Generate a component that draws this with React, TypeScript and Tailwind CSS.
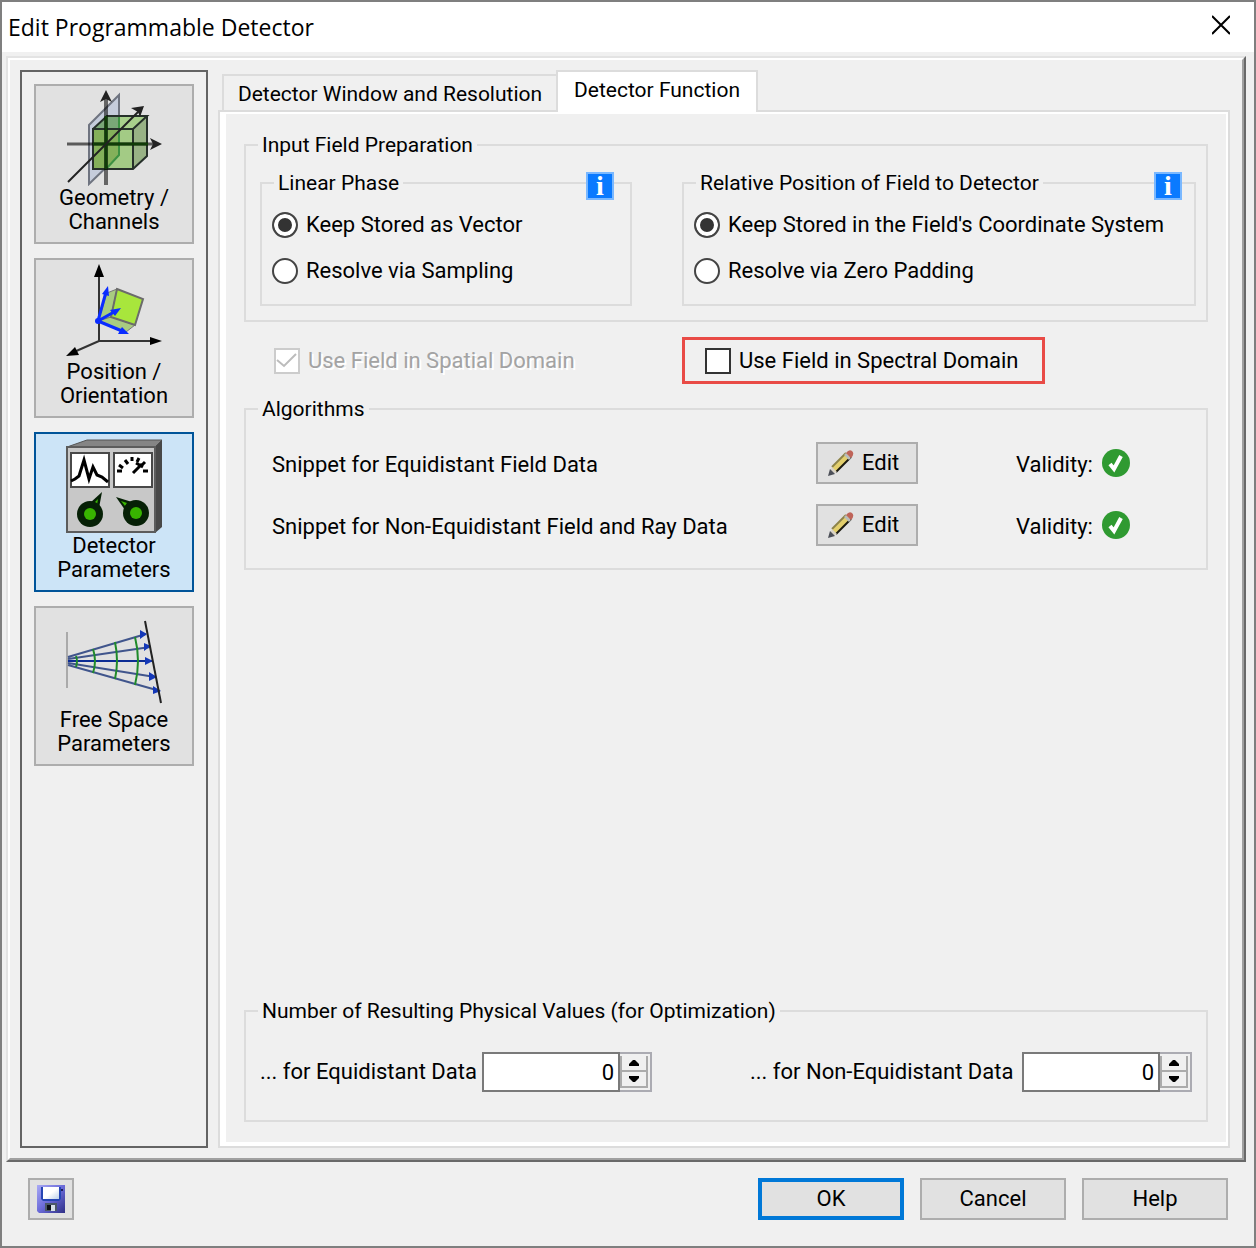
import { useState } from "react";
import type { ReactNode } from "react";

function GeometryIcon() {
  return (
    <svg width="96" height="96" viewBox="0 0 96 96" fill="none" aria-hidden="true">
      <polygon points="23,35 53,5 53,65 23,94" fill="#b9c3d8" fillOpacity="0.7" stroke="#6f7480" strokeWidth="2" />
      <polygon points="27,39 41,26 81,26 67,39" fill="#a9d08c" />
      <polygon points="67,39 81,26 81,66 67,79" fill="#98b285" />
      <rect x="27" y="39" width="40" height="40" fill="#a3cb85" />
      <polygon points="27,39 41,26 53,26 53,65 40,79 27,79" fill="#7fac52" fillOpacity="0.85" />
      <polygon points="27,39 41,26 53,26 53,39" fill="#7aa777" />
      <path d="M53 26V65L40 79" stroke="#3d9142" strokeWidth="2" />
      <path d="M27 39L41 26H81L67 39H27V79H67L81 66V26M67 39V79" stroke="#26302a" strokeWidth="2" />
      <path d="M40 5V95" stroke="#000" strokeOpacity="0.55" strokeWidth="4" />
      <path d="M1 54H90" stroke="#000" strokeOpacity="0.6" strokeWidth="3" />
      <path d="M27 54H82M40 26V79" stroke="#103c08" strokeWidth="3" />
      <path d="M2 92L74 20" stroke="#222" strokeWidth="2" />
      <path d="M40 0L46 12L40 9L34 12Z" fill="#222" />
      <path d="M96 54L84 60L87 54L84 48Z" fill="#222" />
      <path d="M78 16L74 27L72 22L65 18Z" fill="#222" />
    </svg>
  );
}

function PositionIcon() {
  return (
    <svg width="96" height="96" viewBox="0 0 96 96" fill="none" aria-hidden="true">
      <polygon points="41,29 51,25 45,53 32,57" fill="#a9cc80" stroke="#777" strokeWidth="1" />
      <polygon points="32,57 45,53 69,61 60,68" fill="#a9cc80" stroke="#777" strokeWidth="1" />
      <polygon points="51,25 77,35 69,61 45,53" fill="#a8e63c" stroke="#6b6b6b" strokeWidth="2" />
      <path d="M33 8V77H88M33 77L8 88" stroke="#333" strokeWidth="2" />
      <path d="M33 0L38 13H28Z M96 77L84 73V81Z M0 92L9 83L13 91Z" fill="#000" />
      <path d="M32 57L40 28M32 57L48 48M32 57L56 67" stroke="#0a2cff" strokeWidth="3" />
      <path d="M42 22L43 32L36 30Z M55 44L49 52L44 46Z M63 70L52 70L56 63Z" fill="#0a2cff" />
      <circle cx="32" cy="57" r="3" fill="#0a2cff" />
    </svg>
  );
}

function DetectorIcon() {
  return (
    <svg width="96" height="96" viewBox="0 0 96 96" fill="none" aria-hidden="true">
      <polygon points="1,9 21,2 96,2 89,9" fill="#858585" stroke="#555" strokeWidth="1" />
      <polygon points="89,9 96,2 96,89 89,95" fill="#484848" />
      <rect x="1" y="9" width="88" height="85" fill="#c8c8c8" stroke="#5c5c5c" strokeWidth="2" />
      <rect x="5" y="15" width="38" height="34" fill="#fff" stroke="#484848" strokeWidth="2" />
      <rect x="48" y="15" width="38" height="34" fill="#fff" stroke="#484848" strokeWidth="2" />
      <path d="M5 43L9 41L13 38L18 22L23 41L27 29L31 37L36 39L42 44" stroke="#000" strokeWidth="3" />
      <path
        d="M51 33H56M53 27L57 30M59 22L62 26M66 19V23M73 20L71 24M79 24L75 28M82 33H77"
        stroke="#000"
        strokeWidth="3"
      />
      <path d="M67 35L76 26M70 25L77 29" stroke="#000" strokeWidth="3" />
      <path d="M36 54L33 70L24 65Z" fill="#062006" />
      <path d="M32 61L31 67L28 65Z" fill="#38b400" />
      <circle cx="24" cy="76" r="13" fill="#062006" />
      <circle cx="24" cy="76" r="6" fill="#38b400" />
      <path d="M50 59L66 64L59 72Z" fill="#062006" />
      <path d="M55 63L61 65L59 68Z" fill="#38b400" />
      <circle cx="70" cy="75" r="13" fill="#062006" />
      <circle cx="70" cy="75" r="6" fill="#38b400" />
    </svg>
  );
}

function FreeSpaceIcon() {
  return (
    <svg width="96" height="96" viewBox="0 0 96 96" fill="none" aria-hidden="true">
      <path d="M1 20V76" stroke="#aaa" strokeWidth="2" />
      <path d="M2 45L80 22M2 47L84 35M2 51L89 65M2 53L94 79" stroke="#40558c" strokeWidth="2" />
      <path d="M2 49H86" stroke="#0c2c94" strokeWidth="2" />
      <path
        d="M10 44Q12 49 10 55M27 37Q31 49 27 61M49 30Q53 49 49 67M69 25Q75 49 69 73"
        stroke="#1f8a2a"
        strokeWidth="2"
      />
      <path
        d="M81 22L74 18V27Z M85 34L78 31V39Z M87 49L79 45V53Z M91 65L83 60V69Z M95 79L87 74V82Z"
        fill="#1438b8"
      />
      <path d="M79 9L95 91" stroke="#222" strokeWidth="2" />
    </svg>
  );
}

function PencilIcon() {
  return (
    <svg width="26" height="26" viewBox="0 0 26 26" aria-hidden="true">
      <polygon points="4,18 19,3 23,7 8,22" fill="#e3cf6c" />
      <path d="M4 17L18 3" stroke="#8d8347" strokeWidth="2" />
      <path d="M8 22L23 7" stroke="#1c1a10" strokeWidth="2" />
      <polygon points="16,5 18,3 23,8 21,10" fill="#b8bcbc" />
      <path d="M18 3Q21 -1 24 1Q27 4 23 8Z" fill="#bf6459" />
      <polygon points="4,17 9,22 1,25" fill="#d9d2c4" />
      <path d="M0 26L2 19L7 24Z" fill="#4c4f58" />
    </svg>
  );
}

function ValidIcon() {
  return (
    <svg width="28" height="28" viewBox="0 0 28 28" role="img" aria-label="Valid">
      <circle cx="14" cy="14" r="14" fill="#2f9a31" />
      <path d="M8 15L12 20L19 7" fill="none" stroke="#fff" strokeWidth="4" />
    </svg>
  );
}

function SaveIcon() {
  return (
    <svg width="28" height="28" viewBox="0 0 28 28" aria-hidden="true">
      <defs>
        <linearGradient id="disk" x1="0" y1="0" x2="1" y2="1">
          <stop offset="0" stopColor="#a9a9f5" />
          <stop offset="0.5" stopColor="#6a6ad8" />
          <stop offset="1" stopColor="#2f2f86" />
        </linearGradient>
        <linearGradient id="disk-label" x1="0" y1="0" x2="1" y2="1">
          <stop offset="0.5" stopColor="#fff" />
          <stop offset="1" stopColor="#bcd0ea" />
        </linearGradient>
      </defs>
      <path d="M0 0H28V28H2L0 26Z" fill="url(#disk)" />
      <path d="M4 2H6V14H22V2H24V14L22 16H6L4 14Z" fill="#2646b4" />
      <rect x="6" y="2" width="16" height="12" fill="url(#disk-label)" />
      <rect x="24" y="4" width="2" height="2" fill="#1d1d5c" />
      <rect x="8" y="18" width="12" height="8" fill="#4b5868" />
      <rect x="10" y="20" width="4" height="5" fill="#0b0f16" />
      <rect x="14" y="20" width="4" height="6" fill="#d6dfe8" />
    </svg>
  );
}

const sections = [
  { id: "geometry", label: "Geometry / Channels", Icon: GeometryIcon },
  { id: "position", label: "Position / Orientation", Icon: PositionIcon },
  { id: "detector", label: "Detector Parameters", Icon: DetectorIcon },
  { id: "freespace", label: "Free Space Parameters", Icon: FreeSpaceIcon },
];

const snippets = [
  "Snippet for Equidistant Field Data",
  "Snippet for Non-Equidistant Field and Ray Data",
];

function GroupBox({ title, className = "", children }: { title: string; className?: string; children: ReactNode }) {
  return (
    <fieldset className={`min-w-0 border-2 border-[#dcdcdc] ${className}`}>
      <legend className="ml-3 px-1 text-[21px] leading-7">{title}</legend>
      {children}
    </fieldset>
  );
}

function InfoButton() {
  return (
    <button
      type="button"
      aria-label="Info"
      className="flex size-7 items-center justify-center border-2 border-[#7ab8ff] bg-[#0a7aff] font-['Liberation_Serif',serif] text-[28px] leading-6 font-bold text-white"
    >
      i
    </button>
  );
}

interface RadioProps {
  name: string;
  label: string;
  checked: boolean;
  onChange: () => void;
}

function Radio({ name, label, checked, onChange }: RadioProps) {
  return (
    <label className="flex h-7 items-center gap-2 whitespace-nowrap">
      <input
        type="radio"
        name={name}
        checked={checked}
        onChange={onChange}
        className="size-[26px] shrink-0 appearance-none rounded-full border-2 border-[#444] bg-white checked:bg-[#333] checked:shadow-[inset_0_0_0_4px_white]"
      />
      {label}
    </label>
  );
}

interface RadioGroupProps {
  title: string;
  name: string;
  options: string[];
  infoClass: string;
}

function RadioGroup({ title, name, options, infoClass }: RadioGroupProps) {
  const [selected, setSelected] = useState(0);

  return (
    <div className="relative min-w-0">
      <GroupBox title={title}>
        <div className="flex flex-col gap-[18px] pt-[14px] pb-[19px] pl-2.5">
          {options.map((option, i) => (
            <Radio
              key={option}
              name={name}
              label={option}
              checked={selected === i}
              onChange={() => setSelected(i)}
            />
          ))}
        </div>
      </GroupBox>
      <div className={`absolute top-[3px] ${infoClass}`}>
        <InfoButton />
      </div>
    </div>
  );
}

function NumberField({ id, label, labelClass }: { id: string; label: string; labelClass: string }) {
  const [value, setValue] = useState(0);

  return (
    <div className="flex items-center">
      <label htmlFor={id} className={`whitespace-nowrap ${labelClass}`}>
        {label}
      </label>
      <input
        id={id}
        type="text"
        inputMode="numeric"
        value={value}
        onChange={(e) => setValue(Number(e.target.value) || 0)}
        className="h-10 w-[138px] border-2 border-[#7a7a7a] bg-white pr-1 text-right"
      />
      <div className="flex h-10 w-8 flex-col border-2 border-l-0 border-[#ababb2] pt-0.5 pr-0.5 pb-0.5">
        <button
          type="button"
          aria-label="Increase"
          onClick={() => setValue(value + 1)}
          className="flex flex-1 items-center justify-center border-x-2 border-b-2 border-[#ababab]"
        >
          <svg width="10" height="6" viewBox="0 0 10 6" aria-hidden="true">
            <path d="M4 0H6L10 4V6H0V4Z" />
          </svg>
        </button>
        <button
          type="button"
          aria-label="Decrease"
          onClick={() => setValue(Math.max(0, value - 1))}
          className="flex flex-1 items-center justify-center border-x-2 border-b-2 border-[#ababab]"
        >
          <svg width="10" height="6" viewBox="0 0 10 6" aria-hidden="true">
            <path d="M0 0H10V2L6 6H4L0 2Z" />
          </svg>
        </button>
      </div>
    </div>
  );
}

export default function App() {
  const [section, setSection] = useState("detector");
  const [spectral, setSpectral] = useState(false);

  return (
    <div className="flex min-h-screen flex-col border-2 border-[#7f7f7f] bg-[#f0f0f0] font-[Roboto,sans-serif] text-[22px] leading-7 text-black">
      {/* Title bar */}
      <header className="flex h-[50px] items-center justify-between bg-white pr-6 pl-1.5">
        <h1 className="font-['Open_Sans',sans-serif] text-[23px]">Edit Programmable Detector</h1>
        <button type="button" aria-label="Close" className="pb-1">
          <svg width="18" height="20" viewBox="0 0 18 20" stroke="#000" strokeWidth="2" aria-hidden="true">
            <path d="M0 1L18 19M18 1L0 19" />
          </svg>
        </button>
      </header>

      <div className="mx-1 mt-1 mr-2 flex flex-1 border-2 border-t-[#e3e3e3] border-r-[#696969] border-b-[#696969] border-l-[#e3e3e3]">
        <div className="flex min-w-0 flex-1 gap-2.5 border-2 border-t-white border-r-[#a0a0a0] border-b-[#a0a0a0] border-l-white py-2.5 pr-3 pl-2.5">
          {/* Sections */}
          <nav className="flex shrink-0 flex-col gap-3.5 border-2 border-[#646464] p-3">
            {sections.map(({ id, label, Icon }) => (
              <button
                key={id}
                type="button"
                onClick={() => setSection(id)}
                className={`flex size-40 flex-col items-center border-2 pt-1 leading-6 ${
                  section === id ? "border-[#005499] bg-[#cce4f7]" : "border-[#adadad] bg-[#e1e1e1]"
                }`}
              >
                <Icon />
                <span className="w-32">{label}</span>
              </button>
            ))}
          </nav>

          {/* Tabs */}
          <div className="flex min-w-0 flex-1 flex-col">
            <div role="tablist" className="flex h-10 items-end pl-1 text-[21px]">
              <button
                type="button"
                role="tab"
                aria-selected={false}
                className="h-9 w-[334px] border-2 border-r-0 border-b-0 border-[#dcdcdc] pt-0.5 whitespace-nowrap"
              >
                Detector Window and Resolution
              </button>
              <button
                type="button"
                role="tab"
                aria-selected={true}
                className="relative -mb-0.5 h-[42px] w-[202px] border-2 border-b-0 border-[#dcdcdc] bg-white pb-1 whitespace-nowrap"
              >
                Detector Function
              </button>
            </div>

            <div role="tabpanel" className="flex flex-1 flex-col border-2 border-[#dcdcdc]">
              <div className="flex flex-1 flex-col border-t-2 border-r-2 border-b-4 border-l-[6px] border-white px-[18px] pt-[17px] pb-5">
                <GroupBox title="Input Field Preparation">
                  <div className="grid grid-cols-[372fr_514fr] gap-x-[50px] pt-2.5 pr-2.5 pb-3.5 pl-3.5">
                    <RadioGroup
                      title="Linear Phase"
                      name="phase"
                      options={["Keep Stored as Vector", "Resolve via Sampling"]}
                      infoClass="right-[18px]"
                    />
                    <RadioGroup
                      title="Relative Position of Field to Detector"
                      name="position"
                      options={["Keep Stored in the Field's Coordinate System", "Resolve via Zero Padding"]}
                      infoClass="right-3.5"
                    />
                  </div>
                </GroupBox>

                <div className="mt-[15px] grid grid-cols-[372fr_514fr] items-center gap-x-[50px] pr-3 pl-4">
                  <label className="flex items-center gap-2 pl-3.5 whitespace-nowrap text-[#a3a3a3] [text-shadow:2px_2px_0_white]">
                    <span className="relative flex">
                      <input
                        type="checkbox"
                        checked
                        disabled
                        className="size-[26px] shrink-0 appearance-none border-2 border-[#ccc] bg-white"
                      />
                      <svg className="absolute inset-0" width="26" height="26" viewBox="0 0 26 26" fill="none" aria-hidden="true">
                        <path d="M3 12L10 18L22 6" stroke="#bcbcbc" strokeWidth="2" />
                      </svg>
                    </span>
                    Use Field in Spatial Domain
                  </label>
                  <label className="flex h-[47px] w-[363px] items-center gap-2 border-3 border-[#e94b46] pl-5 whitespace-nowrap">
                    <input
                      type="checkbox"
                      checked={spectral}
                      onChange={(e) => setSpectral(e.target.checked)}
                      className="size-[26px] shrink-0 appearance-none border-2 border-[#333] bg-white checked:bg-[#333]"
                    />
                    Use Field in Spectral Domain
                  </label>
                </div>

                <GroupBox title="Algorithms" className="mt-[11px]">
                  <div className="flex flex-col gap-5 pt-[19px] pr-[76px] pb-[22px] pl-[26px]">
                    {snippets.map((snippet) => (
                      <div key={snippet} className="flex items-center">
                        <span className="flex-1 pt-1">{snippet}</span>
                        <button
                          type="button"
                          className="flex h-[42px] w-[102px] items-center gap-2 border-2 border-[#adadad] bg-[#e1e1e1] pl-2.5"
                        >
                          <PencilIcon />
                          Edit
                        </button>
                        <div className="ml-[98px] flex w-[114px] items-center justify-between">
                          <span className="pt-1">Validity:</span>
                          <ValidIcon />
                        </div>
                      </div>
                    ))}
                  </div>
                </GroupBox>

                <GroupBox title="Number of Resulting Physical Values (for Optimization)" className="mt-auto">
                  <div className="flex justify-between pt-[27px] pr-3.5 pb-7 pl-3.5">
                    <NumberField id="equidistant" label="... for Equidistant Data" labelClass="w-[222px]" />
                    <NumberField id="non-equidistant" label="... for Non-Equidistant Data" labelClass="w-[272px]" />
                  </div>
                </GroupBox>
              </div>
            </div>
          </div>
        </div>
      </div>

      {/* Footer */}
      <footer className="flex gap-4 px-[26px] pt-4 pb-[26px]">
        <button
          type="button"
          aria-label="Save"
          className="mr-auto flex h-[42px] w-[46px] items-center justify-center border-2 border-[#adadad] bg-[#e1e1e1]"
        >
          <SaveIcon />
        </button>
        <button type="button" className="h-[42px] w-[146px] border-4 border-[#0078d7] bg-[#e1e1e1]">
          OK
        </button>
        <button type="button" className="h-[42px] w-[146px] border-2 border-[#adadad] bg-[#e1e1e1]">
          Cancel
        </button>
        <button type="button" className="h-[42px] w-[146px] border-2 border-[#adadad] bg-[#e1e1e1]">
          Help
        </button>
      </footer>
    </div>
  );
}
